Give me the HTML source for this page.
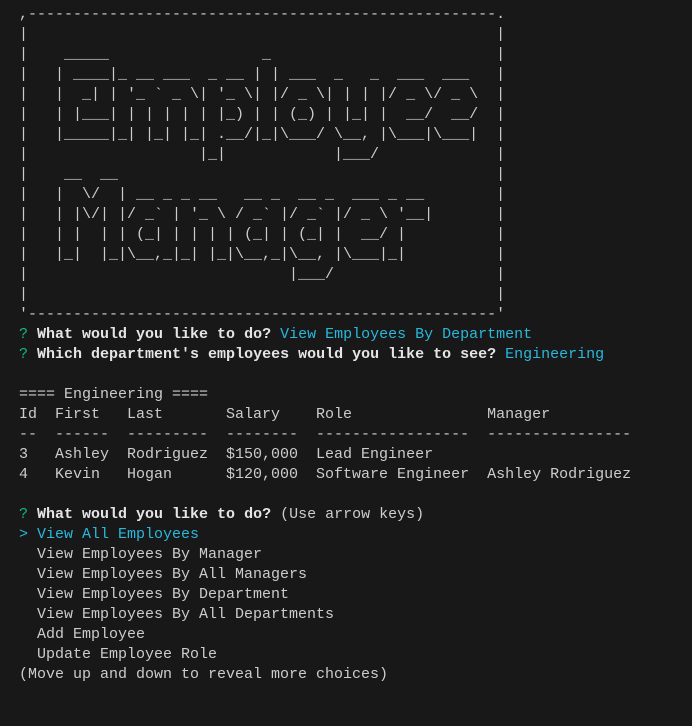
<!DOCTYPE html>
<html><head><meta charset="utf-8"><style>
html,body{margin:0;padding:0;background:#181818;width:692px;height:726px;overflow:hidden}
pre{margin:0;padding:5px 0 0 19px;font-family:"Liberation Mono",monospace;font-size:15px;line-height:20px;color:#cccccc;white-space:pre}
.g{color:#0dbc79}.c{color:#29b8db}.b{font-weight:bold;color:#e5e5e5}
</style></head><body><pre>,----------------------------------------------------.
|                                                    |
|    _____                 _                         |
|   | ____|_ __ ___  _ __ | | ___  _   _  ___  ___   |
|   |  _| | '_ ` _ \| '_ \| |/ _ \| | | |/ _ \/ _ \  |
|   | |___| | | | | | |_) | | (_) | |_| |  __/  __/  |
|   |_____|_| |_| |_| .__/|_|\___/ \__, |\___|\___|  |
|                   |_|            |___/             |
|    __  __                                          |
|   |  \/  | __ _ _ __   __ _  __ _  ___ _ __        |
|   | |\/| |/ _` | '_ \ / _` |/ _` |/ _ \ '__|       |
|   | |  | | (_| | | | | (_| | (_| |  __/ |          |
|   |_|  |_|\__,_|_| |_|\__,_|\__, |\___|_|          |
|                             |___/                  |
|                                                    |
'----------------------------------------------------'
<span class="g">?</span> <span class="b">What would you like to do?</span> <span class="c">View Employees By Department</span>
<span class="g">?</span> <span class="b">Which department's employees would you like to see?</span> <span class="c">Engineering</span>

==== Engineering ====
Id  First   Last       Salary    Role               Manager
--  ------  ---------  --------  -----------------  ----------------
3   Ashley  Rodriguez  $150,000  Lead Engineer
4   Kevin   Hogan      $120,000  Software Engineer  Ashley Rodriguez

<span class="g">?</span> <span class="b">What would you like to do?</span> (Use arrow keys)
<span class="c">&gt; View All Employees</span>
  View Employees By Manager
  View Employees By All Managers
  View Employees By Department
  View Employees By All Departments
  Add Employee
  Update Employee Role
(Move up and down to reveal more choices)</pre></body></html>
